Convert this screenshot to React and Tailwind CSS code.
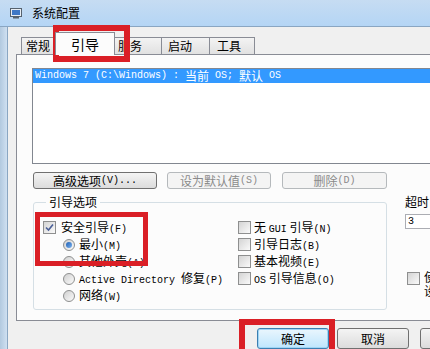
import React from "react";

const M = ({ children }) => (
  <span className="font-['Liberation_Mono',monospace] text-[10px] whitespace-pre">{children}</span>
);

function Check({ checked }) {
  return (
    <span className="w-[13px] h-[13px] shrink-0 border border-[#8e8f8f] bg-gradient-to-br from-[#d4d4d4] to-[#fafafa] flex items-center justify-center">
      {checked && (
        <svg width="9" height="9" viewBox="0 0 9 9">
          <path d="M1 4.5 L3.5 7 L8 1.5" fill="none" stroke="#4a5f97" strokeWidth="1.6" />
        </svg>
      )}
    </span>
  );
}

function Radio({ checked }) {
  return (
    <span className="w-[12px] h-[12px] shrink-0 rounded-full border border-[#8e8f8f] bg-gradient-to-br from-[#d0d0d0] to-[#fbfbfb] flex items-center justify-center">
      {checked && (
        <span className="w-[6px] h-[6px] rounded-full bg-gradient-to-br from-[#1a5fb4] to-[#7db3ee]" />
      )}
    </span>
  );
}

function Btn({ children, disabled, className }) {
  return (
    <div
      className={`h-[17px] shrink-0 flex items-center justify-center rounded-[3px] border text-[12px] leading-none ${
        disabled
          ? "border-[#b5b9bc] bg-[#f4f4f4] text-[#8a8a8a]"
          : "border-[#707070] bg-gradient-to-b from-[#f4f4f4] to-[#dcdcdc] text-black"
      } ${className}`}
    >
      {children}
    </div>
  );
}

export default function App() {
  const tabs = [
    { label: "常规", w: "w-[34px]", pl: "pl-[4px]" },
    { label: "引导", w: "w-[60px]", pl: "pl-[15px]", active: true },
    { label: "服务", w: "w-[47px]", pl: "pl-[3px]" },
    { label: "启动", w: "w-[48px]", pl: "pl-[6px]" },
    { label: "工具", w: "w-[45px]", pl: "pl-[7px]" },
  ];

  return (
    <div className="w-[430px] h-[349px] overflow-hidden relative bg-[#f0f0f0] flex flex-col text-[12px] text-black font-['Noto_Sans_CJK_SC',sans-serif]">

      {/* TITLE BAR */}
      <div className="h-[27px] shrink-0 flex items-center pl-[10px] gap-[10px] bg-gradient-to-b from-[#c6dcf2] to-[#b4d5f5] border-b border-[#8aa6c2]">
        <svg width="12" height="11" viewBox="0 0 12 11">
          <rect x="0.5" y="0.5" width="11" height="8" fill="#e8eef5" stroke="#56626e" />
          <rect x="2" y="2" width="8" height="5" fill="#3f78c6" />
          <rect x="3" y="9" width="6" height="1.5" fill="#56626e" />
        </svg>
        <span className="leading-none">系统配置</span>
      </div>

      <div className="flex flex-1 min-h-0">
        {/* LEFT FRAME */}
        <div className="w-[8px] shrink-0 bg-gradient-to-r from-[#b2c9df] to-[#cfe0f1] border-r border-[#8aa6c2]" />

        <div className="flex-1 flex flex-col pl-[8px] min-w-0">

          {/* TABS */}
          <div className="h-[27px] shrink-0 flex items-end pl-[5px]">
            {tabs.map((t) =>
              t.active ? (
                <div
                  key={t.label}
                  className={`${t.w} ${t.pl} h-[23px] mb-[-1px] relative z-10 flex items-center bg-[#fcfcfc] border border-b-0 border-[#898c95] text-[14px] leading-none`}
                >
                  {t.label}
                </div>
              ) : (
                <div
                  key={t.label}
                  className={`${t.w} ${t.pl} h-[17px] flex items-center bg-gradient-to-b from-[#f3f3f3] to-[#e1e1e1] border border-b-0 border-l-0 first:border-l border-[#898c95] leading-none`}
                >
                  {t.label}
                </div>
              )
            )}
          </div>

          {/* TAB PANEL */}
          <div className="h-[267px] shrink-0 border-l border-t border-b border-[#898c95] bg-[#fcfcfc] pl-[15px] pt-[13px] flex flex-col overflow-hidden">

            {/* LISTBOX */}
            <div className="w-[420px] h-[96px] shrink-0 border border-[#828790] bg-white">
              <div className="h-[14px] bg-[#3399ff] text-white flex items-center pl-[2px] leading-none whitespace-nowrap">
                <M>{"Windows 7 (C:\\Windows) : "}</M>
                <span>当前</span>
                <M>{" OS; "}</M>
                <span>默认</span>
                <M>{" OS"}</M>
              </div>
            </div>

            {/* BUTTONS */}
            <div className="flex mt-[8px] pl-[1px]">
              <Btn className="w-[124px]">
                高级选项<M>(V)...</M>
              </Btn>
              <Btn disabled className="w-[104px] ml-[10px]">
                设为默认值<M>(S)</M>
              </Btn>
              <Btn disabled className="w-[105px] ml-[11px]">
                删除<M>(D)</M>
              </Btn>
            </div>

            {/* OPTIONS */}
            <div className="flex mt-[6px] pl-[1px]">
              <fieldset className="w-[354px] shrink-0 h-[115px] border border-[#d5dfe5] rounded-[3px] pl-[9px] pr-0 pb-0 pt-0 m-0 min-w-0">
                <legend className="ml-[3px] px-[3px] leading-[14px]">引导选项</legend>
                <div className="flex mt-[10px]">
                  <div className="w-[195px] flex flex-col">
                    <div className="h-[17px] flex items-center gap-[5px]">
                      <Check checked />
                      <span>安全引导<M>(F)</M></span>
                    </div>
                    <div className="h-[17px] flex items-center gap-[4px] pl-[20px]">
                      <Radio checked />
                      <span>最小<M>(M)</M></span>
                    </div>
                    <div className="h-[17px] flex items-center gap-[4px] pl-[20px]">
                      <Radio />
                      <span>其他外壳<M>(A)</M></span>
                    </div>
                    <div className="h-[17px] flex items-center gap-[4px] pl-[20px]">
                      <Radio />
                      <span><M>Active Directory </M>修复<M>(P)</M></span>
                    </div>
                    <div className="h-[17px] flex items-center gap-[4px] pl-[20px]">
                      <Radio />
                      <span>网络<M>(W)</M></span>
                    </div>
                  </div>
                  <div className="flex flex-col">
                    <div className="h-[17px] flex items-center gap-[3px]">
                      <Check />
                      <span>无 <M>GUI</M> 引导<M>(N)</M></span>
                    </div>
                    <div className="h-[17px] flex items-center gap-[3px]">
                      <Check />
                      <span>引导日志<M>(B)</M></span>
                    </div>
                    <div className="h-[17px] flex items-center gap-[3px]">
                      <Check />
                      <span>基本视频<M>(E)</M></span>
                    </div>
                    <div className="h-[17px] flex items-center gap-[3px]">
                      <Check />
                      <span><M>OS</M> 引导信息<M>(O)</M></span>
                    </div>
                  </div>
                </div>
              </fieldset>

              {/* TIMEOUT */}
              <div className="ml-[18px] shrink-0 flex flex-col whitespace-nowrap">
                <div className="leading-[14px]">超时</div>
                <div className="mt-[5px] w-[60px] h-[15px] border border-[#abadb3] bg-white flex items-center pl-[2px]">
                  <M>3</M>
                </div>
                <div className="mt-[41px] flex items-start gap-[4px] pl-[2px]">
                  <span className="mt-[2px]"><Check /></span>
                  <span className="leading-[14px]">使所有<br />设置</span>
                </div>
              </div>
            </div>
          </div>

          {/* BOTTOM BUTTONS */}
          <div className="flex mt-[7px] pl-[241px]">
            <div className="w-[72px] h-[21px] shrink-0 rounded-[3px] border border-[#3c7fb1] bg-gradient-to-b from-[#eaf6fd] to-[#bee6fd] shadow-[inset_0_0_0_1px_#9fd5f5] flex items-center justify-center">
              确定
            </div>
            <div className="w-[72px] h-[21px] shrink-0 ml-[8px] rounded-[3px] border border-[#707070] bg-gradient-to-b from-[#f4f4f4] to-[#dcdcdc] flex items-center justify-center">
              取消
            </div>
            <div className="w-[72px] h-[21px] shrink-0 ml-[11px] rounded-[3px] border border-[#707070] bg-gradient-to-b from-[#f4f4f4] to-[#dcdcdc] flex items-center justify-center">
              应用<M>(A)</M>
            </div>
          </div>
        </div>
      </div>

      {/* RED HIGHLIGHTS */}
      <div className="absolute left-[53px] top-[25px] w-[77px] h-[37px] border-[6px] border-[#da1f26]" />
      <div className="absolute left-[35px] top-[212px] w-[113px] h-[54px] border-[5px] border-[#da1f26]" />
      <div className="absolute left-[239px] top-[319px] w-[96px] h-[40px] border-[6px] border-[#da1f26]" />
    </div>
  );
}
